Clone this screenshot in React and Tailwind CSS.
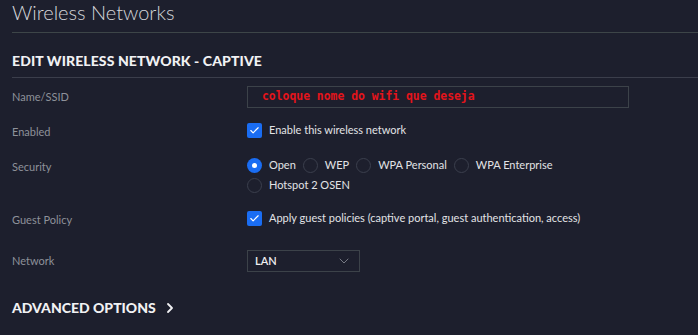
import { ChevronDown, ChevronRight, Check } from "lucide-react";

const Checkbox = () => (
  <span className="flex h-[15px] w-[15px] shrink-0 items-center justify-center rounded-[2px] bg-[#1a6df3]">
    <Check size={11} strokeWidth={2.5} className="text-white" />
  </span>
);

const Radio = ({ checked }) =>
  checked ? (
    <span className="flex h-[15px] w-[15px] shrink-0 items-center justify-center rounded-full bg-[#1a6df3]">
      <span className="h-[5px] w-[5px] rounded-full bg-white" />
    </span>
  ) : (
    <span className="h-[15px] w-[15px] shrink-0 rounded-full border border-[#3b3f4d]" />
  );

const Label = ({ children, nudge }) => (
  <div className={nudge ? "w-[235px] shrink-0 pt-[3px] text-[11px] text-[#8e919a]" : "w-[235px] shrink-0 text-[11px] text-[#8e919a]"}>
    {children}
  </div>
);

function App() {
  const options = ["WEP", "WPA Personal", "WPA Enterprise"];

  return (
    <div
      className="h-[335px] w-[698px] overflow-hidden bg-[#1d1f2d] pl-3"
      style={{ fontFamily: "Lato, 'Open Sans', sans-serif" }}
    >
      <div className="flex h-[33px] items-start border-b border-[#3d4548]">
        <h1 className="mt-[-2px] text-[20px] font-light leading-[28px] text-[#d6d7da]">Wireless Networks</h1>
      </div>

      <div className="flex h-[45px] items-center border-b border-[#3b3e4b] pt-[11px]">
        <h2 className="text-[14px] font-black tracking-[0.1px] text-[#f1f1f3]">EDIT WIRELESS NETWORK - CAPTIVE</h2>
      </div>

      <div className="mt-[8px] flex h-[22px] items-center">
        <Label>Name/SSID</Label>
        <div className="flex h-[22px] w-[382px] items-center border border-[#3c4249] pl-[14px]">
          <span
            className="text-[11.4px] font-bold text-[#e4141b]"
            style={{ fontFamily: "'DejaVu Sans Mono', monospace" }}
          >
            coloque nome do wifi que deseja
          </span>
        </div>
      </div>

      <div className="mt-[15px] flex h-[15px] items-center">
        <Label nudge>Enabled</Label>
        <div className="flex items-center gap-[7px]">
          <Checkbox />
          <span className="text-[11px] text-[#e2e3e6]">Enable this wireless network</span>
        </div>
      </div>

      <div className="mt-[20px] flex items-start">
        <div className="flex h-[15px] items-center pt-[3px]">
          <Label>Security</Label>
        </div>
        <div className="flex flex-col gap-[5px]">
          <div className="flex h-[15px] items-center">
            <Radio checked />
            <span className="ml-[7px] mr-[7px] text-[11px] text-[#e2e3e6]">Open</span>
            {options.map((o) => (
              <div key={o} className="mr-[7px] flex items-center">
                <Radio />
                <span className="ml-[7px] text-[11px] text-[#e2e3e6]">{o}</span>
              </div>
            ))}
          </div>
          <div className="flex h-[15px] items-center">
            <Radio />
            <span className="ml-[7px] text-[11px] text-[#e2e3e6]">Hotspot 2 OSEN</span>
          </div>
        </div>
      </div>

      <div className="mt-[18px] flex h-[15px] items-center">
        <Label nudge>Guest Policy</Label>
        <div className="flex items-center gap-[7px]">
          <Checkbox />
          <span className="text-[11px] text-[#e2e3e6]">
            Apply guest policies (captive portal, guest authentication, access)
          </span>
        </div>
      </div>

      <div className="mt-[24px] flex h-[22px] items-center">
        <Label>Network</Label>
        <div className="flex h-[22px] w-[113px] items-center justify-between border border-[#3c4249] pl-[7px] pr-[7px]">
          <span className="text-[11px] font-semibold text-[#eeeef0]">LAN</span>
          <ChevronDown size={16} strokeWidth={1.25} className="text-[#8a8d96]" />
        </div>
      </div>

      <div className="mt-[25px] flex items-center gap-[6px]">
        <span className="text-[14px] font-black text-[#f1f1f3]">ADVANCED OPTIONS</span>
        <ChevronRight size={16} strokeWidth={2.75} className="text-[#f1f1f3]" />
      </div>
    </div>
  );
}

export default App;
